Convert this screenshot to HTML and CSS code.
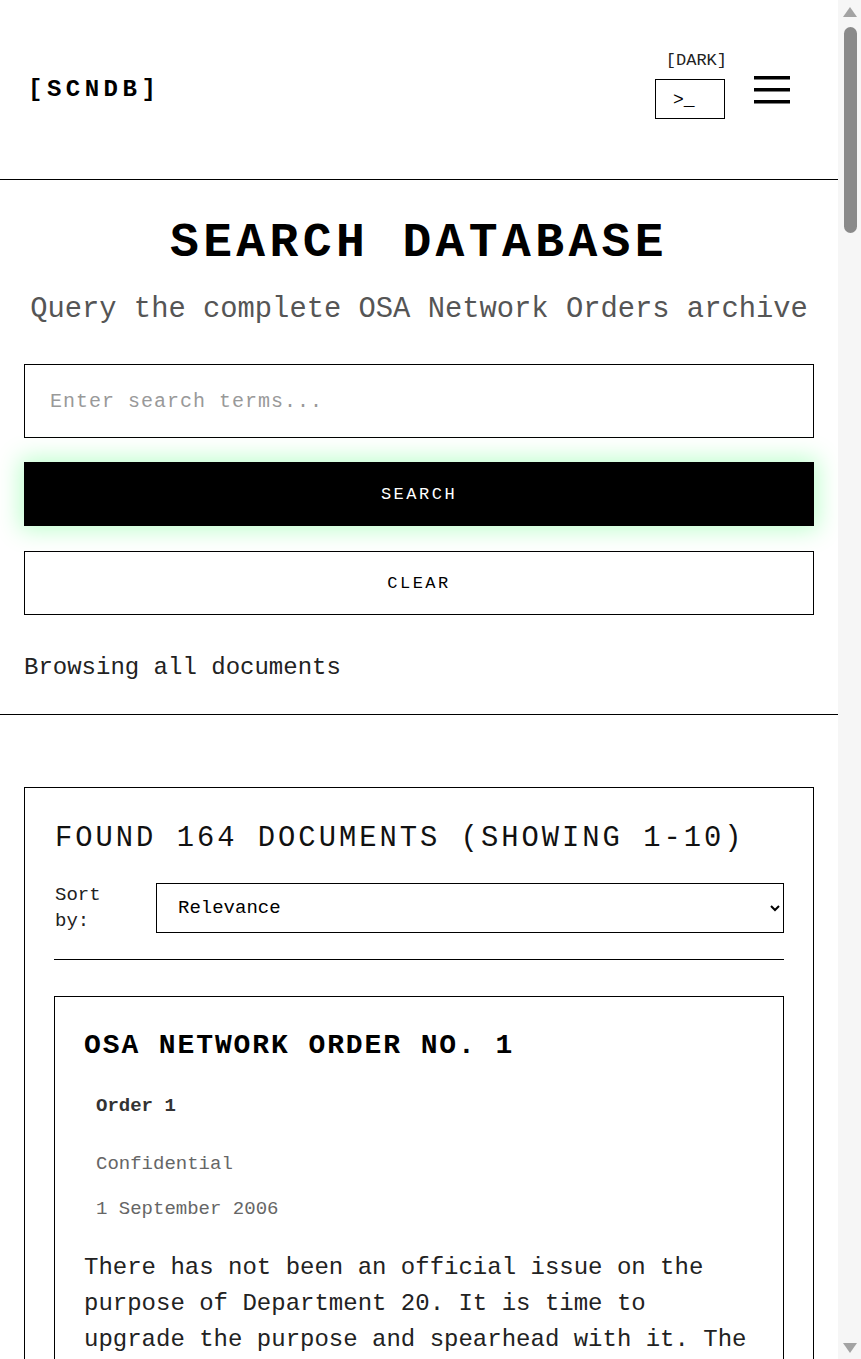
FILE: index.html
```html
<!DOCTYPE html>
<html lang="en">
<head>
<meta charset="utf-8">
<title>SCNDB - Search Database</title>
<link rel="stylesheet" href="styles.css">
</head>
<body>
<div class="page">
<header class="site-header">
  <div class="logo">[SCNDB]</div>
  <div class="header-right">
    <div class="theme-toggle">
      <span class="theme-label">[DARK]</span>
      <button class="theme-btn" type="button">&gt;_</button>
    </div>
    <button class="menu-btn" type="button" aria-label="Menu">
      <svg width="36" height="28" viewBox="0 0 36 28"><rect x="0" y="0" width="36" height="3.5" fill="#000"/><rect x="0" y="12" width="36" height="3.5" fill="#000"/><rect x="0" y="24" width="36" height="3.5" fill="#000"/></svg>
    </button>
  </div>
</header>

<section class="search-section">
  <h1 class="page-title">SEARCH DATABASE</h1>
  <p class="subtitle">Query the complete OSA Network Orders archive</p>
  <input class="search-input" type="text" placeholder="Enter search terms...">
  <button class="btn btn-primary" type="button">SEARCH</button>
  <button class="btn btn-secondary" type="button">CLEAR</button>
  <p class="status">Browsing all documents</p>
</section>

<section class="results">
  <h2 class="results-title">FOUND 164 DOCUMENTS (SHOWING 1-10)</h2>
  <div class="controls">
    <label class="sort-label" for="sort">Sort by:</label>
    <select id="sort" class="sort-select">
      <option>Relevance</option>
      <option>Date (newest)</option>
      <option>Date (oldest)</option>
      <option>Order number</option>
    </select>
  </div>

  <article class="card">
    <h3 class="card-title">OSA NETWORK ORDER NO. 1</h3>
    <div class="meta">
      <p class="meta-order">Order 1</p>
      <p class="meta-class">Confidential</p>
      <p class="meta-date">1 September 2006</p>
    </div>
    <p class="excerpt">There has not been an official issue on the purpose of Department 20. It is time to upgrade the purpose and spearhead with it. The department shall henceforth coordinate all network operations, maintain the archive of orders, and report directly to the council. All members are to acknowledge receipt of this order through the usual channels.</p>
  </article>

  <article class="card">
    <h3 class="card-title">OSA NETWORK ORDER NO. 2</h3>
    <div class="meta">
      <p class="meta-order">Order 2</p>
      <p class="meta-class">Confidential</p>
      <p class="meta-date">15 September 2006</p>
    </div>
    <p class="excerpt">Following the previous order, the structure of Department 20 is to be defined in detail. Each section will report its activities on a regular schedule. Communication between sections must pass through the designated network nodes only.</p>
  </article>

  <article class="card">
    <h3 class="card-title">OSA NETWORK ORDER NO. 3</h3>
    <div class="meta">
      <p class="meta-order">Order 3</p>
      <p class="meta-class">Confidential</p>
      <p class="meta-date">2 October 2006</p>
    </div>
    <p class="excerpt">All personnel are reminded that documents of the network are not to be copied or distributed outside of authorised channels. Breaches will be reviewed by the council without delay.</p>
  </article>

  <article class="card">
    <h3 class="card-title">OSA NETWORK ORDER NO. 4</h3>
    <div class="meta">
      <p class="meta-order">Order 4</p>
      <p class="meta-class">Confidential</p>
      <p class="meta-date">20 October 2006</p>
    </div>
    <p class="excerpt">The archive of network orders is hereby established. Every order issued shall be recorded, numbered and stored so that it may be consulted by authorised members at any time.</p>
  </article>

  <article class="card">
    <h3 class="card-title">OSA NETWORK ORDER NO. 5</h3>
    <div class="meta">
      <p class="meta-order">Order 5</p>
      <p class="meta-class">Confidential</p>
      <p class="meta-date">6 November 2006</p>
    </div>
    <p class="excerpt">New procedures for the registration of members are to take effect immediately. Applications will be processed by the relevant section and confirmed in writing.</p>
  </article>

  <article class="card">
    <h3 class="card-title">OSA NETWORK ORDER NO. 6</h3>
    <div class="meta">
      <p class="meta-order">Order 6</p>
      <p class="meta-class">Confidential</p>
      <p class="meta-date">24 November 2006</p>
    </div>
    <p class="excerpt">Sections are instructed to review their records and to submit a full report of current operations before the end of the year.</p>
  </article>

  <article class="card">
    <h3 class="card-title">OSA NETWORK ORDER NO. 7</h3>
    <div class="meta">
      <p class="meta-order">Order 7</p>
      <p class="meta-class">Confidential</p>
      <p class="meta-date">8 December 2006</p>
    </div>
    <p class="excerpt">The council has approved the revised structure of the network. Details will be distributed to section heads through the usual channels.</p>
  </article>

  <article class="card">
    <h3 class="card-title">OSA NETWORK ORDER NO. 8</h3>
    <div class="meta">
      <p class="meta-order">Order 8</p>
      <p class="meta-class">Confidential</p>
      <p class="meta-date">22 December 2006</p>
    </div>
    <p class="excerpt">Year-end reports have been received. Sections that have not yet submitted their reports are to do so without further delay.</p>
  </article>

  <article class="card">
    <h3 class="card-title">OSA NETWORK ORDER NO. 9</h3>
    <div class="meta">
      <p class="meta-order">Order 9</p>
      <p class="meta-class">Confidential</p>
      <p class="meta-date">10 January 2007</p>
    </div>
    <p class="excerpt">Objectives for the coming year are set out in the attached schedule. Each section is responsible for the objectives assigned to it.</p>
  </article>

  <article class="card">
    <h3 class="card-title">OSA NETWORK ORDER NO. 10</h3>
    <div class="meta">
      <p class="meta-order">Order 10</p>
      <p class="meta-class">Confidential</p>
      <p class="meta-date">28 January 2007</p>
    </div>
    <p class="excerpt">Members are reminded of their obligations under the previous orders. Compliance will be reviewed at the next meeting of the council.</p>
  </article>

  <nav class="pagination">
    <button class="btn btn-secondary page-btn" type="button">NEXT &gt;</button>
  </nav>
</section>
</div>

<div class="scrollbar" aria-hidden="true">
  <span class="sb-arrow sb-up"></span>
  <span class="sb-thumb"></span>
  <span class="sb-arrow sb-down"></span>
</div>
</body>
</html>
```

FILE: styles.css
```css
* {
  box-sizing: border-box;
}

html, body {
  margin: 0;
  padding: 0;
  background: #fff;
}

body {
  font-family: "Liberation Mono", "Courier New", monospace;
  color: #000;
}

.page {
  width: 838px;
}

p, h1, h2, h3 {
  margin: 0;
}

/* Header */
.site-header {
  height: 180px;
  display: flex;
  align-items: center;
  justify-content: space-between;
  padding: 0 48px 0 28px;
  border-bottom: 1px solid #000;
}

.logo {
  font-size: 24px;
  font-weight: bold;
  letter-spacing: 4.5px;
  line-height: 28px;
}

.header-right {
  display: flex;
  align-items: center;
  gap: 29px;
}

.theme-toggle {
  display: flex;
  flex-direction: column;
  align-items: flex-end;
  gap: 8px;
  margin-bottom: 10px;
}

.theme-label {
  font-size: 17px;
  line-height: 20px;
  color: #222;
  margin-right: -2px;
}

.theme-btn {
  width: 70px;
  height: 40px;
  border: 1px solid #000;
  background: #fff;
  font-family: "Liberation Mono", "Courier New", monospace;
  font-size: 18px;
  color: #000;
  padding: 3px 0 0 17px;
  text-align: left;
  display: flex;
  align-items: center;
}

.menu-btn {
  border: 0;
  background: none;
  padding: 0;
  display: flex;
}

/* Search section */
.search-section {
  padding: 34px 24px 31px;
  border-bottom: 1px solid #000;
  display: flex;
  flex-direction: column;
}

.page-title {
  font-size: 48px;
  font-weight: bold;
  letter-spacing: 4.4px;
  line-height: 58px;
  text-align: center;
}

.subtitle {
  margin-top: 21px;
  font-size: 28.8px;
  line-height: 34px;
  color: #555;
  text-align: center;
}

.search-input {
  margin-top: 37px;
  width: 100%;
  height: 74px;
  border: 1px solid #000;
  border-radius: 0;
  padding: 0 25px;
  font-family: "Liberation Mono", "Courier New", monospace;
  font-size: 20px;
  letter-spacing: 1px;
  color: #000;
  outline: none;
}

.search-input::placeholder {
  color: #999;
}

.btn {
  width: 100%;
  height: 64px;
  border: 1px solid #000;
  border-radius: 0;
  font-family: "Liberation Mono", "Courier New", monospace;
  font-size: 17px;
  letter-spacing: 2.5px;
  cursor: pointer;
}

.btn-primary {
  margin-top: 24px;
  background: #000;
  color: #fff;
  box-shadow: 0 0 22px 4px rgba(0, 255, 60, 0.26);
}

.btn-secondary {
  margin-top: 25px;
  background: #fff;
  color: #000;
}

.status {
  margin-top: 38px;
  font-size: 24px;
  line-height: 30px;
  color: #222;
}

/* Results */
.results {
  margin: 72px 24px 60px;
  border: 1px solid #000;
  padding: 34px 29px 40px;
}

.results-title {
  font-size: 28.8px;
  font-weight: normal;
  letter-spacing: 3px;
  line-height: 34px;
  padding-left: 1px;
  color: #111;
}

.controls {
  margin-top: 26px;
  display: flex;
  align-items: center;
  gap: 16px;
  padding-bottom: 25px;
  border-bottom: 1px solid #000;
}

.sort-label {
  flex: 0 0 86px;
  font-size: 19px;
  line-height: 26px;
  padding-left: 1px;
  color: #222;
}

.sort-select {
  flex: 1;
  height: 50px;
  border: 1px solid #000;
  border-radius: 0;
  background: #fff;
  padding: 0 0 0 17px;
  font-family: "Liberation Mono", "Courier New", monospace;
  font-size: 19px;
  color: #000;
}

.card {
  margin-top: 36px;
  border: 1px solid #000;
  padding: 32px 29px 36px;
}

.card-title {
  font-size: 28px;
  font-weight: bold;
  letter-spacing: 1.9px;
  line-height: 34px;
}

.meta {
  padding-left: 12px;
}

.meta-order {
  margin-top: 31px;
  font-size: 19px;
  font-weight: bold;
  line-height: 24px;
  color: #333;
}

.meta-class {
  margin-top: 34px;
  font-size: 19px;
  line-height: 24px;
  color: #666;
}

.meta-date {
  margin-top: 21px;
  font-size: 19px;
  line-height: 24px;
  color: #666;
}

.excerpt {
  margin-top: 29px;
  font-size: 24px;
  line-height: 36px;
  color: #222;
}

.pagination {
  margin-top: 36px;
}

.page-btn {
  margin-top: 0;
}

/* Scrollbar drawn over the right edge of the window */
.scrollbar {
  position: fixed;
  top: 0;
  right: 0;
  width: 23px;
  height: 100vh;
  background: #f6f6f6;
  display: flex;
  flex-direction: column;
  align-items: center;
}

.sb-arrow {
  width: 0;
  height: 0;
  border-left: 7px solid transparent;
  border-right: 7px solid transparent;
  margin-left: 1px;
}

.sb-up {
  margin-top: 7px;
  border-bottom: 10px solid #a3a3a3;
}

.sb-down {
  margin-top: auto;
  margin-bottom: 6px;
  border-top: 10px solid #a3a3a3;
}

.sb-thumb {
  margin-top: 10px;
  width: 13px;
  height: 206px;
  border-radius: 7px;
  background: #8a8a8a;
  margin-left: 1px;
}
```
